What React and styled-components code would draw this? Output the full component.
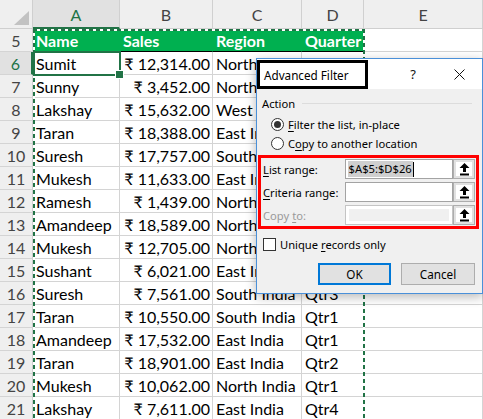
import styled, { createGlobalStyle } from "styled-components"

const GlobalStyle = createGlobalStyle`
  html, body {
    margin: 0;
    padding: 0;
    background: #fff;
    overflow: hidden;
  }
  * { box-sizing: border-box; }
`

const rows = [
  ["Sumit", "₹ 12,314.00", "North India", "Qtr1"],
  ["Sunny", "₹ 3,452.00", "North India", "Qtr2"],
  ["Lakshay", "₹ 15,632.00", "West India", "Qtr3"],
  ["Taran", "₹ 18,388.00", "East India", "Qtr4"],
  ["Suresh", "₹ 17,757.00", "South India", "Qtr1"],
  ["Mukesh", "₹ 11,633.00", "East India", "Qtr2"],
  ["Ramesh", "₹ 1,439.00", "North India", "Qtr3"],
  ["Amandeep", "₹ 18,589.00", "North India", "Qtr4"],
  ["Mukesh", "₹ 12,705.00", "North India", "Qtr2"],
  ["Sushant", "₹ 6,021.00", "East India", "Qtr1"],
  ["Suresh", "₹ 7,561.00", "South India", "Qtr3"],
  ["Taran", "₹ 10,550.00", "South India", "Qtr1"],
  ["Amandeep", "₹ 17,532.00", "East India", "Qtr1"],
  ["Taran", "₹ 18,901.00", "East India", "Qtr2"],
  ["Mukesh", "₹ 10,062.00", "North India", "Qtr1"],
  ["Lakshay", "₹ 7,611.00", "East India", "Qtr4"],
]

const Page = styled.div`
  position: relative;
  width: 483px;
  height: 419px;
  overflow: hidden;
  font-family: Lato, "Liberation Sans", sans-serif;
`

const Sheet = styled.div`
  display: grid;
  grid-template-columns: 33px 87px 93px 89px 62px 1fr;
  grid-auto-rows: 23px;
  grid-template-rows: 29px;
`

const Corner = styled.div`
  background: #efefef;
  border-right: 1px solid #cfcfcf;
  border-bottom: 1px solid #cfcfcf;
  display: flex;
  align-items: flex-end;
  justify-content: flex-end;
  padding: 0 3px 3px 0;
`

const ColHeader = styled.div`
  display: flex;
  align-items: center;
  justify-content: center;
  background: ${p => (p.$selected ? "#e1e1e1" : "#efefef")};
  color: ${p => (p.$selected ? "#217346" : "#444")};
  border-right: 1px solid #d0d0d0;
  border-bottom: ${p => (p.$selected ? "2px solid #217346" : "1px solid #cfcfcf")};
  font-size: 16px;
  padding-top: ${p => (p.$selected ? "1px" : "0")};
`

const RowHeader = styled.div`
  display: flex;
  align-items: center;
  justify-content: center;
  background: ${p => (p.$selected ? "#e1e1e1" : "#efefef")};
  color: ${p => (p.$selected ? "#217346" : "#444")};
  border-right: ${p => (p.$selected ? "2px solid #217346" : "1px solid #cfcfcf")};
  border-bottom: 1px solid #d4d4d4;
  font-size: 16px;
`

const Cell = styled.div`
  display: flex;
  align-items: center;
  justify-content: ${p => (p.$right ? "flex-end" : "flex-start")};
  padding: 1px ${p => (p.$right ? "2px" : "3px")} 0 3px;
  white-space: nowrap;
  overflow: hidden;
  font-size: 16px;
  color: #000;
  border-right: 1px solid #d4d4d4;
  border-bottom: 1px solid #d4d4d4;
  ${p => p.$head && `
    background: #00b050;
    color: #fff;
    font-weight: 700;
    border-right-color: #00b050;
    border-bottom: 1px solid #000;
  `}
`

const Ants = styled.div`
  position: absolute;
  left: 33px;
  top: 29px;
  width: 332px;
  height: 420px;
  pointer-events: none;
  background:
    repeating-linear-gradient(90deg, #217346 0 4px, #fff 4px 7px) top left / 100% 2px no-repeat,
    repeating-linear-gradient(180deg, #217346 0 4px, #fff 4px 7px) top left / 2px 100% no-repeat,
    repeating-linear-gradient(180deg, #217346 0 4px, #fff 4px 7px) top right / 2px 100% no-repeat;
`

const ActiveCell = styled.div`
  position: absolute;
  left: 33px;
  top: 51px;
  width: 88px;
  height: 25px;
  border: 2px solid #217346;
  pointer-events: none;
  &::after {
    content: "";
    position: absolute;
    right: -5px;
    bottom: -5px;
    width: 7px;
    height: 7px;
    background: #217346;
    border: 1px solid #fff;
  }
`

const Dialog = styled.div`
  position: absolute;
  left: 256px;
  top: 58px;
  width: 227px;
  height: 236px;
  border: 1px solid #4a90d9;
  background: #f0f0f0;
  box-shadow: 0 3px 10px rgba(0, 0, 0, 0.28);
  font-family: "Noto Sans", "Open Sans", sans-serif;
  font-size: 11.2px;
  color: #000;
  display: flex;
  flex-direction: column;
  white-space: nowrap;
`

const TitleBar = styled.div`
  display: flex;
  height: 30px;
  background: #fff;
`

const TitleBox = styled.div`
  width: 111px;
  margin-top: 1px;
  border: 3px solid #000;
  padding-left: 4px;
  display: flex;
  align-items: center;
  font-size: 11.7px;
`

const Spacer = styled.div`
  flex: 1;
`

const TitleButton = styled.div`
  width: 46px;
  display: flex;
  align-items: center;
  justify-content: center;
  font-size: 13px;
  color: #111;
`

const Body = styled.div`
  display: flex;
  flex-direction: column;
  padding-bottom: 7px;
`

const GroupHead = styled.div`
  display: flex;
  align-items: center;
  height: 16px;
  margin-top: 6px;
  padding: 0 10px 0 5px;
  &::after {
    content: "";
    flex: 1;
    height: 1px;
    margin-left: 7px;
    background: #dcdcdc;
  }
`

const OptionRow = styled.div`
  display: flex;
  align-items: center;
  height: 19px;
  padding-left: 14px;
  gap: 4px;
`

const Radio = styled.span`
  width: 13px;
  height: 13px;
  border-radius: 50%;
  border: 1px solid #333;
  background: #fff;
  display: flex;
  align-items: center;
  justify-content: center;
  &::after {
    content: "";
    width: 7px;
    height: 7px;
    border-radius: 50%;
    background: ${p => (p.$checked ? "#333" : "transparent")};
  }
`

const Check = styled.span`
  width: 13px;
  height: 13px;
  border: 1px solid #333;
  background: #fff;
`

const Options = styled.div`
  margin-top: 4px;
`

const RedBox = styled.div`
  margin: 2px 3px 0 1px;
  border: 3px solid #f00;
  padding: 1px;
  display: flex;
  flex-direction: column;
  gap: 3px;
`

const FieldRow = styled.div`
  display: flex;
  align-items: center;
  height: 20px;
`

const FieldLabel = styled.span`
  width: 83px;
  padding-left: 1px;
  color: ${p => (p.$disabled ? "#9a9a9a" : "#000")};
`

const Input = styled.div`
  width: 109px;
  height: 20px;
  background: #fff;
  border: 1px solid ${p => (p.$disabled ? "#c4c4c4" : "#a3a3a3")};
  padding: ${p => (p.$disabled ? "3px" : "0 2px")};
  display: flex;
  align-items: center;
`

const DisabledFill = styled.div`
  flex: 1;
  align-self: stretch;
  background: #f0f0f0;
`

const Selection = styled.span`
  background: #cfcfcf;
  line-height: 16px;
  padding: 0 1px;
`

const Caret = styled.span`
  width: 1px;
  height: 15px;
  background: #000;
`

const PickButton = styled.div`
  width: 22px;
  height: 20px;
  border: 1px solid #adadad;
  background: #fff;
  box-shadow: inset 0 0 0 2px #e1e1e1;
  display: flex;
  align-items: center;
  justify-content: center;
`

const CheckRow = styled(OptionRow)`
  margin-top: 7px;
  height: 16px;
  padding-left: 6px;
`

const Buttons = styled.div`
  display: flex;
  justify-content: flex-end;
  gap: 10px;
  margin-top: 11px;
  padding-right: 7px;
`

const Button = styled.div`
  width: ${p => p.$w}px;
  height: 22px;
  background: #e1e1e1;
  border: ${p => (p.$default ? "2px solid #0078d7" : "1px solid #adadad")};
  display: flex;
  align-items: center;
  justify-content: center;
  font-size: 11.7px;
`

const U = styled.span`
  text-decoration: underline;
  text-underline-offset: 2px;
`

const UpArrow = () => (
  <svg width="11" height="13" viewBox="0 0 11 13">
    <path d="M5.5 0 L10.5 5 L7 5 L7 9 L4 9 L4 5 L0.5 5 Z" fill="#000" />
    <rect x="1" y="10.5" width="9" height="2" fill="#000" />
  </svg>
)

const CornerTriangle = () => (
  <svg width="15" height="14" viewBox="0 0 15 14">
    <polygon points="15,0 15,14 0,14" fill="#c2c2c2" />
  </svg>
)

const CloseIcon = () => (
  <svg width="11" height="11" viewBox="0 0 11 11">
    <path d="M0.5 0.5 L10.5 10.5 M10.5 0.5 L0.5 10.5" stroke="#111" strokeWidth="1" />
  </svg>
)

const Row = ({ n, data }) => (
  <>
    <RowHeader $selected={n === 6}>{n}</RowHeader>
    <Cell>{data[0]}</Cell>
    <Cell $right>{data[1]}</Cell>
    <Cell>{data[2]}</Cell>
    <Cell>{data[3]}</Cell>
    <Cell />
  </>
)

const App = () => {
  return (
    <Page>
      <GlobalStyle />
      <Sheet>
        <Corner><CornerTriangle /></Corner>
        {["A", "B", "C", "D", "E"].map(c => (
          <ColHeader key={c} $selected={c === "A"}>{c}</ColHeader>
        ))}

        <RowHeader>5</RowHeader>
        {["Name", "Sales", "Region", "Quarter"].map(h => (
          <Cell key={h} $head>{h}</Cell>
        ))}
        <Cell />

        {rows.map((r, i) => (
          <Row key={i} n={i + 6} data={r} />
        ))}
      </Sheet>

      <Ants />
      <ActiveCell />

      <Dialog>
        <TitleBar>
          <TitleBox>Advanced Filter</TitleBox>
          <Spacer />
          <TitleButton>?</TitleButton>
          <TitleButton><CloseIcon /></TitleButton>
        </TitleBar>
        <Body>
          <GroupHead>Action</GroupHead>
          <Options>
            <OptionRow>
              <Radio $checked />
              <span><U>F</U>ilter the list, in-place</span>
            </OptionRow>
            <OptionRow>
              <Radio />
              <span>C<U>o</U>py to another location</span>
            </OptionRow>
          </Options>
          <RedBox>
            <FieldRow>
              <FieldLabel><U>L</U>ist range:</FieldLabel>
              <Input>
                <Selection>$A$5:$D$26</Selection>
                <Caret />
              </Input>
              <PickButton><UpArrow /></PickButton>
            </FieldRow>
            <FieldRow>
              <FieldLabel><U>C</U>riteria range:</FieldLabel>
              <Input />
              <PickButton><UpArrow /></PickButton>
            </FieldRow>
            <FieldRow>
              <FieldLabel $disabled>Copy <U>t</U>o:</FieldLabel>
              <Input $disabled><DisabledFill /></Input>
              <PickButton><UpArrow /></PickButton>
            </FieldRow>
          </RedBox>
          <CheckRow>
            <Check />
            <span>Unique <U>r</U>ecords only</span>
          </CheckRow>
          <Buttons>
            <Button $w={73} $default>OK</Button>
            <Button $w={74}>Cancel</Button>
          </Buttons>
        </Body>
      </Dialog>
    </Page>
  )
}

export default App
